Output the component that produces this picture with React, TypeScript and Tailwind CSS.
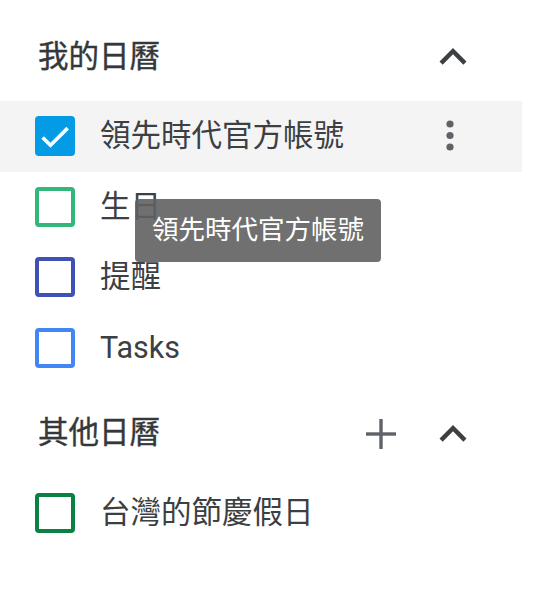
import React from 'react';

const font = { fontFamily: 'Roboto, "Noto Sans CJK TC", sans-serif' };

const ChevronUp = () => (
    <svg width="54" height="54" viewBox="0 0 24 24" className="fill-[#3c4043]">
        <path d="M12 8l-6 6 1.41 1.41L12 10.83l4.59 4.58L18 14z" />
    </svg>
);

const PlusIcon = () => (
    <svg width="32" height="32" viewBox="0 0 32 32" className="stroke-[#5f6368]" strokeWidth="3.4">
        <line x1="16" y1="1" x2="16" y2="31" />
        <line x1="1" y1="16" x2="31" y2="16" />
    </svg>
);

const MoreVert = () => (
    <svg width="10" height="34" viewBox="0 0 10 34" className="fill-[#5f6368]">
        <circle cx="5" cy="5" r="3.6" />
        <circle cx="5" cy="16.5" r="3.6" />
        <circle cx="5" cy="28" r="3.6" />
    </svg>
);

interface RowProps {
    label: string;
    border: string;
    checked?: boolean;
    hovered?: boolean;
}

const CalendarRow = ({ label, border, checked, hovered }: RowProps) => (
    <div className={`relative flex h-[70.5px] w-[522px] items-center ${hovered ? 'bg-[#f4f4f4]' : ''}`}>
        <div className="ml-[35px] flex h-[40px] w-[40px] items-center justify-center">
            {checked ? (
                <div className="flex h-[40px] w-[40px] items-center justify-center rounded-[4px] bg-[#039be5]">
                    <svg width="36" height="36" viewBox="0 0 24 24" className="fill-white">
                        <path d="M9 16.5L4.6 12.1l-1.7 1.7L9 19.9 21.3 7.6l-1.7-1.7z" />
                    </svg>
                </div>
            ) : (
                <div className={`h-[40px] w-[40px] rounded-[4px] border-4 ${border}`} />
            )}
        </div>
        <span className="ml-[25px] text-[30.5px] leading-none text-[#3c4043]">{label}</span>
        {hovered && (
            <div className="ml-auto mr-[67px]">
                <MoreVert />
            </div>
        )}
    </div>
);

export default function App() {
    return (
        <div className="relative h-[600px] w-[548px] bg-white" style={font}>
            {/* 我的日曆 */}
            <div className="flex h-[101px] items-center pt-[13px]">
                <span className="ml-[38px] text-[30.5px] leading-none text-[#35383b] [-webkit-text-stroke:0.4px_#35383b]">我的日曆</span>
                <div className="ml-auto mr-[68px]">
                    <ChevronUp />
                </div>
            </div>
            <CalendarRow label="領先時代官方帳號" border="" checked hovered />
            <CalendarRow label="生日" border="border-[#33b679]" />
            <CalendarRow label="提醒" border="border-[#3f51b5]" />
            <CalendarRow label="Tasks" border="border-[#4285f4]" />

            {/* 其他日曆 */}
            <div className="flex h-[94.5px] items-center pt-[6.5px]">
                <span className="ml-[38px] text-[30.5px] leading-none text-[#35383b] [-webkit-text-stroke:0.4px_#35383b]">其他日曆</span>
                <div className="ml-auto flex items-center">
                    <div className="mr-[29px]">
                        <PlusIcon />
                    </div>
                    <div className="mr-[68px]">
                        <ChevronUp />
                    </div>
                </div>
            </div>
            <CalendarRow label="台灣的節慶假日" border="border-[#0b8043]" />

            {/* tooltip */}
            <div className="absolute left-[135px] top-[199px] flex h-[63px] w-[246px] items-center justify-center rounded-[4px] bg-[#616161]/90">
                <span className="text-[26.5px] leading-none text-white">領先時代官方帳號</span>
            </div>
        </div>
    );
}
